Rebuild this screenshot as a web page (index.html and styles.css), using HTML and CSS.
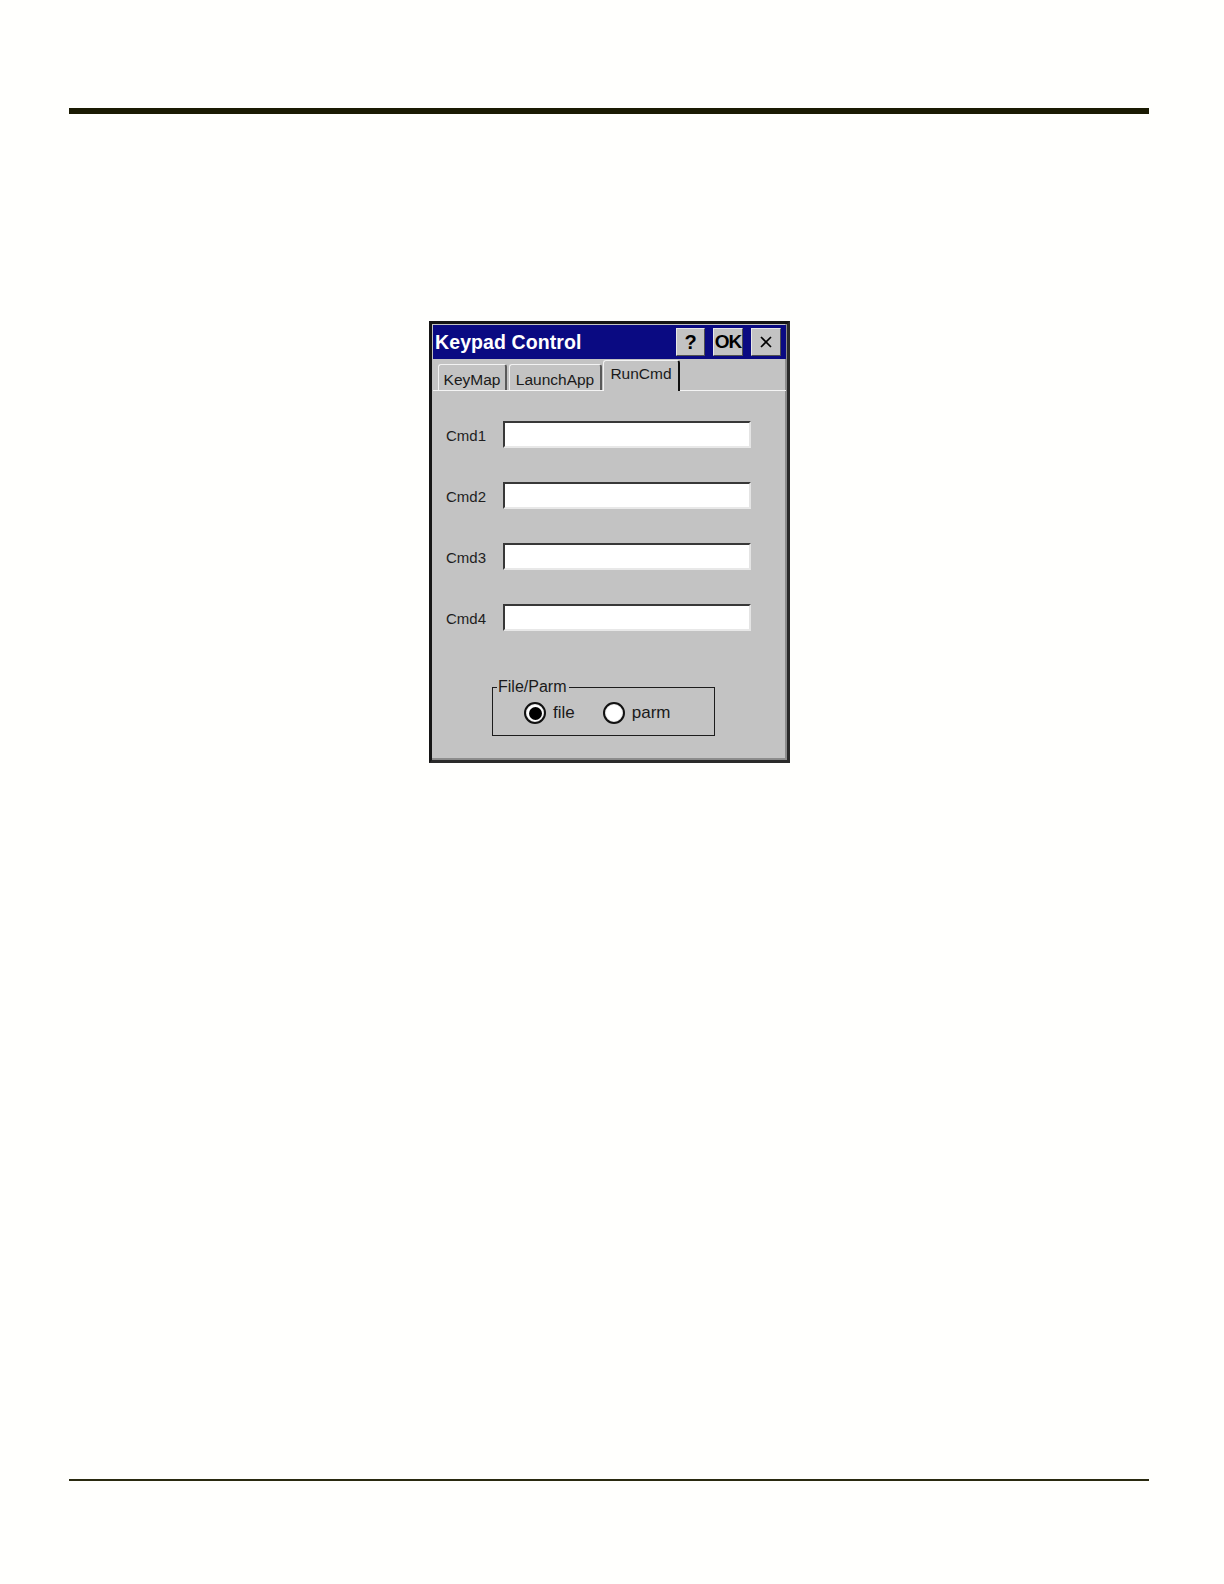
FILE: index.html
```html
<!DOCTYPE html>
<html>
<head>
<meta charset="utf-8">
<link rel="stylesheet" href="styles.css">
</head>
<body>
<div class="page">
  <div class="rule-top"></div>
  <div class="dialog">
    <div class="titlebar">
      <span class="title">Keypad Control</span>
      <div class="tbtns">
        <div class="tbtn q">?</div>
        <div class="tbtn ok">OK</div>
        <div class="tbtn x"><svg width="14" height="14" viewBox="0 0 14 14"><path d="M2 2 L12 12 M12 2 L2 12" stroke="#000" stroke-width="1.7" fill="none"/></svg></div>
      </div>
    </div>
    <div class="tabs">
      <div class="tab t1">KeyMap</div>
      <div class="tab t2">LaunchApp</div>
      <div class="tab t3 active">RunCmd</div>
    </div>
    <div class="panel">
      <div class="row"><span class="lbl">Cmd1</span><div class="field"></div></div>
      <div class="row"><span class="lbl">Cmd2</span><div class="field"></div></div>
      <div class="row"><span class="lbl">Cmd3</span><div class="field"></div></div>
      <div class="row"><span class="lbl">Cmd4</span><div class="field"></div></div>
      <fieldset class="group">
        <legend>File/Parm</legend>
        <div class="radios">
          <div class="radio"><span class="dot on"></span><span class="rtext">file</span></div>
          <div class="radio r2"><span class="dot"></span><span class="rtext">parm</span></div>
        </div>
      </fieldset>
    </div>
  </div>
  <div class="rule-bottom"></div>
</div>
</body>
</html>
```
FILE: styles.css
```css
* { box-sizing: border-box; }
html, body { margin: 0; background: #fffffd; }
body { font-family: "Liberation Sans", Arial, sans-serif; color: #111; }
.page { width: 1224px; height: 1584px; padding-top: 108px; overflow: hidden; }
.rule-top { margin-left: 69px; width: 1080px; height: 6px; background: #1a1a02; }
.rule-bottom { margin: 716px 0 0 69px; width: 1080px; height: 2px; background: #2a2a10; }

.dialog {
  margin: 207px 0 0 429px;
  width: 361px; height: 442px;
  border: 3px solid #151515;
  border-right-color: #2a2a2a; border-bottom-color: #2a2a2a;
  padding: 1px;
  background: #c3c3c3;
  display: flex; flex-direction: column;
  box-shadow: inset -2px -2px 0 #8c8c8c;
}
.titlebar {
  height: 34px; flex: none;
  background: #0a0a82;
  display: flex; align-items: center;
  padding: 0 5px 0 2px;
}
.title { flex: 1; color: #fff; font-weight: bold; font-size: 19.5px; letter-spacing: 0.1px; }
.tbtns { display: flex; gap: 8px; }
.tbtn {
  width: 30px; height: 28px;
  background: #c3c3c3;
  border-top: 1px solid #e8e8e8; border-left: 1px solid #e8e8e8;
  border-right: 1px solid #505050; border-bottom: 1px solid #505050;
  display: flex; align-items: center; justify-content: center;
  font-weight: bold; color: #000; font-size: 20px;
}
.tbtn.q { width: 29px; }
.tbtn.ok { font-size: 19px; letter-spacing: -1px; }

.tabs {
  height: 32px; flex: none;
  display: flex; align-items: flex-end;
  padding-left: 5px;
  border-bottom: 1px solid #f4f4f4;
  position: relative; z-index: 1;
}
.tab {
  height: 26px;
  font-size: 15.5px; line-height: 20px;
  padding-top: 5px;
  text-align: center;
  background: #c3c3c3;
  border-top: 1px solid #f2f2f2; border-left: 1px solid #f2f2f2;
  border-right: 2px solid #5a5a5a;
  border-radius: 3px 3px 0 0;
  color: #1a1a1a;
}
.t1 { width: 69px; margin-right: 2px; }
.t2 { width: 93px; margin-right: 1px; }
.t3 { width: 77px; }
.tab.active {
  height: 31px; margin-bottom: -1px;
  padding-top: 3px;
  border-right: 2px solid #111;
}

.panel { flex: 1; padding: 30px 0 0 13px; display: flex; flex-direction: column; }
.row { display: flex; align-items: center; height: 27px; margin-bottom: 34px; }
.row:nth-child(4) { margin-bottom: 0; }
.lbl { width: 57px; font-size: 15px; color: #1e1e1e; padding-top: 2px; }
.field {
  width: 248px; height: 27px; background: #fff;
  border-top: 2px solid #383838; border-left: 2px solid #383838;
  border-right: 2px solid #e4e4e4; border-bottom: 2px solid #e8e8e8;
}

.group {
  margin: 47px 0 0 46px;
  width: 223px; height: 58px;
  border: 1px solid #1c1c1c;
  padding: 0 0 0 4px;
  min-width: 0;
}
.group legend { padding: 0 3px 0 1px; font-size: 16px; line-height: 18px; color: #1a1a1a; }
.radios { display: flex; align-items: center; margin: 6px 0 0 27px; height: 22px; }
.radio { display: flex; align-items: center; }
.radio.r2 { margin-left: 28px; }
.dot {
  width: 22px; height: 22px; border-radius: 50%;
  border: 2px solid #111; background: #fff;
  box-shadow: inset 0 0 0 1px #e8e8e8;
  display: flex; align-items: center; justify-content: center;
}
.dot.on::after { content: ""; width: 13px; height: 13px; border-radius: 50%; background: #000; }
.rtext { margin-left: 7px; font-size: 17px; color: #1a1a1a; }
```
